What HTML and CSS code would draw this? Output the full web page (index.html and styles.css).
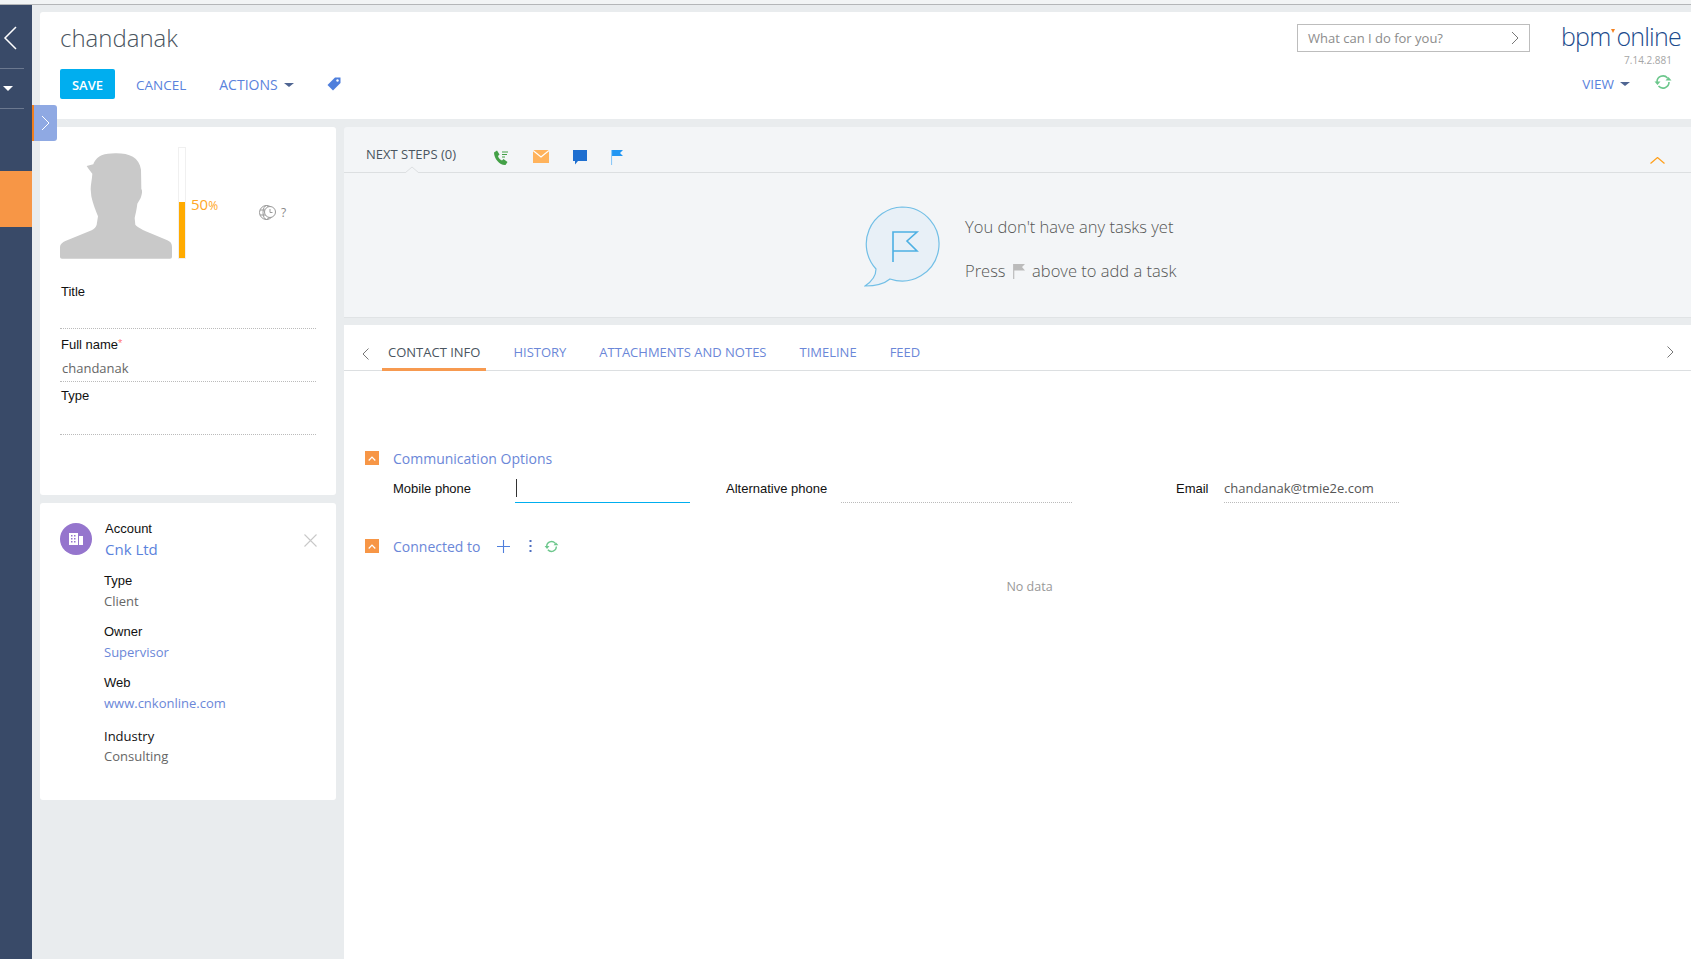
FILE: index.html
```html
<!DOCTYPE html>
<html lang="en">
<head>
  <meta charset="UTF-8" />
  <title>chandanak</title>
  <link rel="stylesheet" href="styles.css">
</head>
<body>
  <div class="top-strip"></div>

  <div class="app">
    <!-- Left navigation -->
    <aside class="sidebar">
      <svg class="side-back" width="14" height="24" viewBox="0 0 14 24"><path d="M13 1 2 12l11 11" fill="none" stroke="#fff" stroke-width="1.5"/></svg>
      <div class="side-group"><span class="side-caret"></span></div>
      <div class="side-active"></div>
    </aside>

    <!-- Panel toggle -->
    <div class="panel-toggle">
      <svg width="9" height="16" viewBox="0 0 9 16"><path d="M1 1l7 7-7 7" fill="none" stroke="#fff" stroke-width="1"/></svg>
    </div>

    <main class="main">
      <!-- Page header -->
      <header class="page-header">
        <div class="header-left">
          <h1 class="page-title">chandanak</h1>
          <div class="toolbar">
            <button class="btn-save">SAVE</button>
            <a class="tool-link tool-cancel">CANCEL</a>
            <a class="tool-link tool-actions">ACTIONS<span class="caret"></span></a>
            <svg class="tag-icon" width="14" height="14" viewBox="0 0 14 14"><path d="M8 .5h5.5V6L6 13.5.5 8z" fill="#4f7fdc"/><circle cx="10.500" cy="3.500" r="1.200" fill="#fff"/></svg>
          </div>
        </div>
        <div class="header-right">
          <div class="header-top">
            <div class="search-box">
              <span>What can I do for you?</span>
              <svg width="8" height="14" viewBox="0 0 8 14"><path d="M1 1l6 6-6 6" fill="none" stroke="#777" stroke-width="1"/></svg>
            </div>
            <div class="logo">bpm<span class="logo-mark"></span>online</div>
          </div>
          <div class="version">7.14.2.881</div>
          <div class="view-row">
            <a class="tool-link">VIEW<span class="caret"></span></a>
            <svg class="refresh" width="18" height="16" viewBox="0 0 18 16"><path d="M3 8a6 6 0 0 1 10.500-4M15 8a6 6 0 0 1-10.500 4" fill="none" stroke="#6cc78c" stroke-width="1.600"/><path d="M11.500 6.500h6L14.500 3zM.5 7.500h6L3.500 11z" fill="#6cc78c"/></svg>
          </div>
        </div>
      </header>

      <div class="content">
        <!-- Left column -->
        <div class="left-col">
          <section class="card profile-card">
            <div class="profile-top">
              <svg class="avatar" width="112" height="106" viewBox="0 0 336 318"><path d="M165 1C205 0 238 12 243 50L244 108C248 112 246 125 242 135L232 152C230 170 226 185 224 195L226 215C232 222 250 232 270 240L322 262C332 266 336 272 336 282V312Q336 317 330 317H6Q0 317 0 312V282C0 274 8 268 16 264L95 232C102 228 108 222 110 215L114 190C108 175 98 150 94 130L92 108C92 95 96 80 97 62L86 48 80 39 100 34C103 25 112 12 125 7 137 2 150 2 165 1Z" fill="#c9c9c9"/></svg>
              <div class="progress"><div class="progress-fill"></div></div>
              <div class="percent">50<small>%</small></div>
              <div class="time-zone">
                <svg width="17" height="17" viewBox="0 0 17 17" fill="none" stroke="#999" stroke-width="1"><circle cx="7.500" cy="8.500" r="7"/><ellipse cx="7.500" cy="8.500" rx="3.500" ry="7"/><path d="M1 6h12M1 11h9"/><circle cx="11" cy="8" r="5.500" fill="#fff"/><path d="M11 5v3.500h2.500"/></svg>
                <span>?</span>
              </div>
            </div>
            <div class="field field-first">
              <div class="field-label">Title</div>
            </div>
            <div class="field">
              <div class="field-label">Full name<span class="required">*</span></div>
              <div class="field-value">chandanak</div>
            </div>
            <div class="field">
              <div class="field-label">Type</div>
            </div>
          </section>

          <section class="card account-card">
            <div class="account-icon">
              <svg width="14" height="12" viewBox="0 0 14 12" fill="#fff"><path d="M0 0h9v12H0zM10 3h4v9h-4z"/><path d="M2 2h1.500v1.500H2zM5 2h1.500v1.500H5zM2 5h1.500v1.500H2zM5 5h1.500v1.500H5zM2 8h1.500v1.500H2zM5 8h1.500v1.500H5z" fill="#9575cd"/></svg>
            </div>
            <div class="account-info">
              <div class="field-label">Account</div>
              <a class="account-name">Cnk Ltd</a>
              <div class="detail detail-type">
                <div class="field-label">Type</div>
                <div class="detail-value">Client</div>
              </div>
              <div class="detail">
                <div class="field-label">Owner</div>
                <a class="detail-value detail-link">Supervisor</a>
              </div>
              <div class="detail">
                <div class="field-label">Web</div>
                <a class="detail-value detail-link">www.cnkonline.com</a>
              </div>
              <div class="detail detail-industry">
                <div class="field-label label-open">Industry</div>
                <div class="detail-value">Consulting</div>
              </div>
            </div>
            <svg class="close-icon" width="13" height="13" viewBox="0 0 13 13"><path d="M.5.5l12 12M12.500.5l-12 12" stroke="#c8c8c8" stroke-width="1.100"/></svg>
          </section>
        </div>

        <!-- Right column -->
        <div class="right-col">
          <section class="next-steps">
            <div class="steps-bar">
              <span class="steps-title">NEXT STEPS (0)</span>
              <svg width="16" height="16" viewBox="0 0 16 16"><path d="M1 2.500 4 .5l2.500 4-1.500 1.500c.5 2 2 3.500 4 4.500l1.500-1.500 4 3-2 3C7 15.500 1 9 1 2.500z" fill="#43a047"/><path d="M9 2h6M9 4.500h5M9 7h3" stroke="#43a047" stroke-width="1"/></svg>
              <svg width="16" height="13" viewBox="0 0 16 13"><path fill="#ffb35c" d="M0 0h16v13H0z"/><path d="M0 .5 8 7l8-6.500" fill="none" stroke="#fff" stroke-width="1.200"/></svg>
              <svg width="14" height="15" viewBox="0 0 14 15"><path fill="#1e6fd0" d="M0 0h14v11H5l-3 3.500V11H0z"/></svg>
              <svg class="flag-small" width="12" height="15" viewBox="0 0 12 15"><path fill="#2196f3" d="M1 0h11L9 3l3 3H1z"/><path d="M.5 0v15" stroke="#8cc8f8" stroke-width="1.200"/></svg>
              <svg class="collapse-icon" width="15" height="7" viewBox="0 0 15 7"><path d="M.5 6.500l7-6 7 6" fill="none" stroke="#ff9f1a" stroke-width="1.200"/></svg>
              <svg class="notch" width="14" height="7" viewBox="0 0 14 7"><path d="M0 7l7-6 7 6" fill="#f3f5f7" stroke="#dcdfe1"/></svg>
            </div>
            <div class="steps-empty">
              <svg width="76" height="81" viewBox="0 0 76 81"><path d="M38 1a37 37 0 1 1-12 72c-6 5-15 7-25 7 6-4 11-10 11-17A37 37 0 0 1 38 1z" fill="#e8f0f7" stroke="#72bfe6" stroke-width="1.200"/><path d="M29 56V26h24l-10 9 10 10H29" fill="none" stroke="#4db0e3" stroke-width="1.600"/></svg>
              <div class="empty-text">
                <p>You don't have any tasks yet</p>
                <p>Press <svg class="flag-inline" width="12" height="15" viewBox="0 0 12 15"><path fill="#bbb" d="M1 0h11L9 3l3 3.500H1z"/><path d="M.7 0v15" stroke="#bbb" stroke-width="1.200"/></svg> above to add a task</p>
              </div>
            </div>
          </section>

          <section class="tabs-panel">
            <nav class="tabs">
              <svg class="tab-prev" width="7" height="12" viewBox="0 0 7 12"><path d="M6.500.5 1 6l5.500 5.500" fill="none" stroke="#777" stroke-width="1"/></svg>
              <a class="tab tab-active">CONTACT INFO</a>
              <a class="tab">HISTORY</a>
              <a class="tab">ATTACHMENTS AND NOTES</a>
              <a class="tab">TIMELINE</a>
              <a class="tab">FEED</a>
              <svg class="tab-next" width="7" height="12" viewBox="0 0 7 12"><path d="M.5.5 6 6 .5 11.500" fill="none" stroke="#777" stroke-width="1"/></svg>
            </nav>

            <div class="tab-body">
              <div class="group-head">
                <span class="group-toggle"><svg width="8" height="5" viewBox="0 0 8 5"><path d="M.7 4.500 4 1l3.300 3.500" fill="none" stroke="#fff" stroke-width="1.200"/></svg></span>
                <span class="group-title">Communication Options</span>
              </div>
              <div class="comm-row">
                <label class="comm-label comm-mobile">Mobile phone</label>
                <div class="comm-input comm-input-active"><span class="text-cursor"></span></div>
                <label class="comm-label comm-alt">Alternative phone</label>
                <div class="comm-input comm-input-alt"></div>
                <label class="comm-label comm-email">Email</label>
                <div class="comm-input comm-input-email">chandanak@tmie2e.com</div>
              </div>
              <div class="group-head group-connected">
                <span class="group-toggle"><svg width="8" height="5" viewBox="0 0 8 5"><path d="M.7 4.500 4 1l3.300 3.500" fill="none" stroke="#fff" stroke-width="1.200"/></svg></span>
                <span class="group-title">Connected to</span>
                <svg class="group-plus" width="13" height="13" viewBox="0 0 13 13"><path d="M6.500 0v13M0 6.500h13" stroke="#4f7fdc" stroke-width="1.100"/></svg>
                <svg class="group-dots" width="3" height="12" viewBox="0 0 3 12" fill="#4f6fc0"><path d="M.5 0h2v2h-2zM.5 5h2v2h-2zM.5 10h2v2h-2z"/></svg>
                <svg class="group-refresh" width="15" height="13" viewBox="0 0 18 16"><path d="M3 8a6 6 0 0 1 10.500-4M15 8a6 6 0 0 1-10.500 4" fill="none" stroke="#6cc78c" stroke-width="1.600"/><path d="M11.500 6.500h6L14.500 3zM.5 7.500h6L3.500 11z" fill="#6cc78c"/></svg>
              </div>
              <div class="no-data">No data</div>
            </div>
          </section>
        </div>
      </div>
    </main>
  </div>
</body>
</html>
```

FILE: styles.css
```css
body {
  margin: 0;
  height: 100vh;
  overflow: hidden;
  display: flex;
  flex-direction: column;
  background: #e9ecee;
  font-family: 'Open Sans', sans-serif;
  color: #444;
}

a { cursor: pointer; }

.top-strip {
  height: 4px;
  flex: none;
  background: #f2f4f5;
  border-bottom: 1px solid #b4b6b8;
}

.app {
  flex: 1;
  display: flex;
  position: relative;
  min-height: 0;
}

/* Sidebar */
.sidebar {
  width: 32px;
  flex: none;
  background: #394a68;
  display: flex;
  flex-direction: column;
}

.side-back {
  margin: 21px 0 0 3px;
}

.side-group {
  width: 24px;
  height: 41px;
  margin-top: 18px;
  border-top: 1px solid #6b788f;
  border-bottom: 1px solid #6b788f;
  box-sizing: border-box;
  display: flex;
  align-items: center;
  padding-left: 3px;
}

.side-caret {
  border-left: 5px solid transparent;
  border-right: 5px solid transparent;
  border-top: 5px solid #fff;
}

.side-active {
  height: 56px;
  margin-top: 62px;
  background: #f79646;
}

.panel-toggle {
  position: absolute;
  left: 32px;
  top: 100px;
  width: 23px;
  height: 36px;
  border-left: 2px solid #f07f1e;
  border-radius: 0 3px 3px 0;
  background: #8fa9e3;
  display: flex;
  align-items: center;
  justify-content: center;
}

/* Main area */
.main {
  flex: 1;
  min-width: 0;
  padding: 7px 0 0 8px;
  display: flex;
  flex-direction: column;
}

.page-header {
  height: 107px;
  flex: none;
  background: #fff;
  display: flex;
  justify-content: space-between;
  border-radius: 3px 0 0 3px;
}

.header-left {
  padding: 10px 0 0 20px;
}

.page-title {
  margin: 0;
  font-size: 24px;
  font-weight: 300;
  line-height: 32px;
  color: #4a5560;
}

.toolbar {
  display: flex;
  align-items: center;
  margin-top: 15px;
  height: 30px;
}

.btn-save {
  width: 55px;
  height: 30px;
  border: none;
  border-radius: 2px;
  background: #00aeef;
  color: #fff;
  font-family: 'Open Sans', sans-serif;
  font-size: 13px;
  font-weight: 600;
  padding: 2px 0 0;
}

.tool-link {
  font-size: 13.500px;
  line-height: 20px;
  padding-top: 1px;
  color: #5a82dc;
  display: inline-flex;
  align-items: center;
}

.tool-cancel { margin-left: 21px; }
.tool-actions { margin-left: 33px; font-size: 14px; }

.caret {
  margin-left: 6px;
  border-left: 5px solid transparent;
  border-right: 5px solid transparent;
  border-top: 4px solid #4f6592;
}

.tag-icon { margin-left: 33px; }

.header-right {
  padding: 12px 19px 0 0;
  display: flex;
  flex-direction: column;
  align-items: flex-end;
}

.header-top {
  display: flex;
  align-items: flex-start;
}

.search-box {
  width: 233px;
  height: 28px;
  box-sizing: border-box;
  border: 1px solid #bdbdbd;
  padding: 0 10px;
  display: flex;
  align-items: center;
  justify-content: space-between;
  font-size: 13px;
  color: #8c8c8c;
}

.logo {
  width: 111px;
  margin-left: 31px;
  font-size: 25px;
  line-height: 24px;
  font-weight: 300;
  letter-spacing: -0.8px;
  white-space: nowrap;
  color: #1c4b8c;
}

.logo-mark {
  display: inline-block;
  vertical-align: 13px;
  margin: 0 1px;
  border-left: 2px solid transparent;
  border-right: 2px solid transparent;
  border-top: 4px solid #f58220;
}

.version {
  margin-top: 1px;
  font-size: 10px;
  line-height: 14px;
  color: #a5a5a5;
}

.view-row {
  display: flex;
  align-items: center;
  margin-top: 5px;
  height: 22px;
}

.refresh { margin-left: 24px; margin-top: -3px; }

/* Content columns */
.content {
  flex: 1;
  display: flex;
  margin-top: 8px;
  min-height: 0;
}

.left-col {
  width: 296px;
  flex: none;
  margin-right: 8px;
}

.card {
  background: #fff;
  border-radius: 3px;
  margin-bottom: 8px;
  box-sizing: border-box;
}

.profile-card {
  height: 368px;
  padding: 20px 20px 0;
}

.profile-top {
  height: 112px;
  display: flex;
  margin-bottom: 17px;
}

.avatar { align-self: flex-end; }

.progress {
  width: 8px;
  height: 112px;
  margin-left: 6px;
  box-sizing: border-box;
  border: 1px solid #f0f0f0;
  display: flex;
  align-items: flex-end;
}

.progress-fill {
  width: 100%;
  height: 56px;
  background: #ffab00;
}

.percent {
  margin: 47px 0 0 5px;
  font-size: 15px;
  line-height: 20px;
  color: #ffa726;
}

.percent small { font-size: 12px; }

.time-zone {
  margin: 57px 0 0 41px;
  height: 17px;
  display: flex;
  align-items: center;
  gap: 5px;
  font-size: 12px;
  color: #888;
}

.field {
  height: 53px;
  box-sizing: border-box;
  padding-top: 5px;
  border-bottom: 1px dotted #bbb;
}

.field-first { padding-top: 7px; }

.field-label {
  font-family: 'Liberation Sans', sans-serif;
  font-size: 13px;
  line-height: 18px;
  color: #111;
  padding-left: 1px;
}

.required { color: #f77; font-size: 11px; vertical-align: 2px; }

.field-value {
  margin-top: 4px;
  font-size: 13px;
  line-height: 20px;
  color: #666;
  padding-left: 2px;
}

.account-card {
  height: 297px;
  padding: 17px 19px 0 20px;
  display: flex;
  align-items: flex-start;
}

.account-icon {
  width: 32px;
  height: 32px;
  margin-top: 3px;
  flex: none;
  border-radius: 50%;
  background: #9575cd;
  display: flex;
  align-items: center;
  justify-content: center;
}

.account-info {
  flex: 1;
  margin-left: 12px;
}

.account-name {
  display: block;
  margin: 1px 0 0 1px;
  font-size: 15px;
  line-height: 20px;
  color: #5a82dc;
}

.detail { margin-top: 12px; }
.detail-type { margin-top: 13px; }
.detail-industry { margin-top: 14px; }

.detail .field-label { padding-left: 0; }

.label-open {
  font-family: 'Open Sans', sans-serif;
}

.detail-value {
  display: block;
  margin-top: 1px;
  font-size: 13px;
  line-height: 20px;
  color: #666;
}

.detail-link { color: #6b87d8; }

.close-icon {
  margin-top: 14px;
}

/* Right column */
.right-col {
  flex: 1;
  min-width: 0;
  display: flex;
  flex-direction: column;
}

.next-steps {
  height: 191px;
  flex: none;
  background: #f3f5f7;
  border-bottom: 1px solid #e0e3e5;
  box-sizing: border-box;
  border-radius: 3px 0 0 0;
}

.steps-bar {
  height: 46px;
  box-sizing: border-box;
  border-bottom: 1px solid #dcdfe1;
  padding: 18px 0 0 22px;
  display: flex;
  align-items: flex-start;
  position: relative;
}

.steps-title {
  width: 127px;
  font-size: 13px;
  line-height: 18px;
  color: #4a5560;
}

.steps-bar svg { margin-top: 5px; margin-right: 24px; }
.steps-bar .flag-small { margin-right: 0; }

.steps-bar .collapse-icon,
.steps-bar .notch {
  position: absolute;
  margin: 0;
}

.collapse-icon { right: 26px; top: 30px; }
.notch { left: 61px; top: 39px; }

.steps-empty {
  display: flex;
  padding: 33px 0 0 520px;
}

.empty-text {
  margin-left: 25px;
  padding-top: 9px;
  font-size: 16.500px;
  font-weight: 300;
  color: #555;
}

.empty-text p {
  margin: 0 0 20px;
  line-height: 24px;
}

.flag-inline { margin: 0 3px; vertical-align: -2px; }

.tabs-panel {
  flex: 1;
  margin-top: 7px;
  background: #fff;
}

.tabs {
  height: 46px;
  box-sizing: border-box;
  border-bottom: 1px solid #dcdfe1;
  display: flex;
  align-items: stretch;
  gap: 21px;
  padding-left: 18px;
  position: relative;
}

.tab-prev { align-self: center; margin: 13px -8px 0 0; }

.tab {
  box-sizing: border-box;
  padding: 16px 6px 0;
  margin-bottom: -1px;
  font-size: 13px;
  line-height: 22px;
  color: #6b87d8;
}

.tab-active {
  color: #4a5560;
  border-bottom: 3px solid #f79a50;
}

.tab-next {
  position: absolute;
  right: 17px;
  top: 21px;
}

.tab-body {
  padding: 80px 0 0 21px;
}

.group-head {
  display: flex;
  align-items: center;
  height: 14px;
}

.group-toggle {
  width: 14px;
  height: 14px;
  background: #f79646;
  display: flex;
  align-items: center;
  justify-content: center;
}

.group-title {
  margin-left: 14px;
  font-size: 14px;
  color: #6b87d8;
}

.comm-row {
  display: flex;
  align-items: flex-end;
  margin-top: 6px;
  height: 32px;
}

.comm-label {
  font-family: 'Liberation Sans', sans-serif;
  font-size: 13px;
  line-height: 18px;
  color: #111;
  margin-bottom: 5px;
}

.comm-mobile { margin-left: 28px; width: 122px; }
.comm-alt { margin-left: 36px; width: 115px; }
.comm-email { margin-left: 104px; width: 48px; }

.comm-input {
  height: 28px;
  box-sizing: border-box;
  border-bottom: 1px dotted #bbb;
  font-size: 13px;
  line-height: 26px;
  color: #555;
}

.comm-input-active {
  width: 175px;
  border-bottom: 1px solid #00aeef;
  padding: 4px 0 0 1px;
}

.text-cursor {
  display: block;
  width: 1px;
  height: 18px;
  background: #333;
}

.comm-input-alt { width: 231px; }
.comm-input-email { width: 175px; }

.group-connected { margin-top: 36px; }

.group-plus { margin-left: 17px; }
.group-dots { margin-left: 19px; }
.group-refresh { margin-left: 12px; }

.no-data {
  margin-top: 25px;
  padding-right: 21px;
  text-align: center;
  width: 1329px;
  font-size: 12.500px;
  line-height: 18px;
  color: #999;
}
```
